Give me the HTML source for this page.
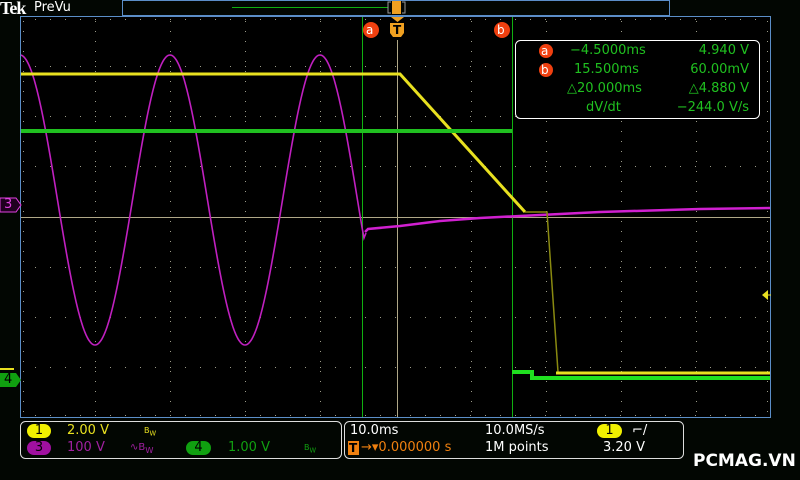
<!DOCTYPE html>
<html><head><meta charset="utf-8"><style>
body{margin:0;width:800px;height:480px;background:#020602;overflow:hidden;font-family:"DejaVu Sans","Liberation Sans",sans-serif;position:relative}
.t{position:absolute;white-space:nowrap;font-size:13px;line-height:14px}
.pill{position:absolute;border-radius:8px;font-size:13px;text-align:center;line-height:14px;color:#000}
</style></head><body>
<svg width="800" height="480" style="position:absolute;left:0;top:0">
<rect x="20" y="16" width="751" height="402" fill="#000"/>
<g id="grid" fill="#9a9a88"></g>
<line x1="20" y1="217.5" x2="771" y2="217.5" stroke="#b0a888" stroke-width="1"/>
<line x1="397.5" y1="40" x2="397.5" y2="418" stroke="#b0a888" stroke-width="1"/>
<line x1="362.5" y1="16" x2="362.5" y2="418" stroke="#10b010"/>
<line x1="512.5" y1="16" x2="512.5" y2="418" stroke="#10b010"/>
<path id="sine" fill="none" stroke="#c020c0" stroke-width="1.6" d=""/>
<path fill="none" stroke="#d020d0" stroke-width="2.5" d="M365,232 L368,229 L400,226 L440,221 L480,218 L520,216 L600,212 L700,209 L771,208"/>
<path fill="none" stroke="#e8e020" stroke-width="3" d="M20,74 L400,74 L525,212"/>
<path fill="none" stroke="#8a8a10" stroke-width="1.5" d="M525,212 L547,212 L558,372"/>
<path fill="none" stroke="#e8e020" stroke-width="3" d="M556,373 L771,373"/>
<path fill="none" stroke="#20c020" stroke-width="4" d="M20,131 L512,131"/>
<path fill="none" stroke="#20e020" stroke-width="4" d="M512,372 L532,372 L532,378 L771,378"/>
<rect x="20.5" y="16.5" width="750" height="401" fill="none" stroke="#5b8ec8"/>
<rect x="122.5" y="0.5" width="547" height="15" fill="none" stroke="#5b8ec8"/>
<line x1="232" y1="7.5" x2="388" y2="7.5" stroke="#10b010"/>
<path d="M391,2 h-3 v11 h3 M402,2 h3 v11 h-3" fill="none" stroke="#999"/>
<rect x="392" y="1" width="9" height="13" fill="#f0a020"/>
<circle cx="371" cy="30" r="8" fill="#f04010"/>
<circle cx="502" cy="30" r="8" fill="#f04010"/>
<path d="M391,17 h13 l-6.5,5z" fill="#f0a020"/>
<path d="M390,23 h14 v10 l-3,4 h-8 l-3,-4z" fill="#f0a020"/>
<path d="M0,198 h16 l5,7 l-5,7 h-16z" fill="#200020" stroke="#e040e0"/>
<path d="M0,373 h16 l5,7 l-5,7 h-16z" fill="#10a010"/>
<line x1="0" y1="369" x2="14" y2="369" stroke="#e8e020" stroke-width="2"/>
<path d="M762,295 l6,-5 v10z" fill="#e8e020"/>
<line x1="766" y1="295" x2="771" y2="295" stroke="#e8e020"/>
<rect x="515.5" y="40.5" width="244" height="78" rx="5" fill="#000" stroke="#fff"/>
<circle cx="546" cy="51" r="7" fill="#f04010"/>
<circle cx="546" cy="70" r="7" fill="#f04010"/>
<rect x="20.5" y="421.5" width="321" height="37" rx="5" fill="none" stroke="#ddd"/>
<rect x="344.5" y="421.5" width="339" height="37" rx="5" fill="none" stroke="#ddd"/>
<rect x="348" y="441" width="11" height="14" fill="#f08010"/>
</svg>
<div class="t" style="left:0;top:-1px;font-family:'Liberation Serif',serif;font-weight:bold;font-size:18px;line-height:18px;color:#fff;letter-spacing:-1px">Tek</div>
<div class="t" style="left:34px;top:1px;color:#fff">PreVu</div>
<div class="t" style="left:366px;top:23px;color:#fff;font-size:12px">a</div>
<div class="t" style="left:497px;top:23px;color:#fff;font-size:12px">b</div>
<div class="t" style="left:393px;top:23px;color:#000;font-size:12px;font-weight:bold">T</div>
<div class="t" style="left:4px;top:198px;color:#e040e0;font-size:13px">3</div>
<div class="t" style="left:4px;top:373px;color:#000;font-size:13px">4</div>
<div class="t" style="left:541px;top:44px;color:#fff;font-size:12px">a</div>
<div class="t" style="left:541px;top:63px;color:#fff;font-size:12px">b</div>
<div class="t" style="left:570px;top:44px;color:#20c020">−4.5000ms</div>
<div class="t" style="left:574px;top:63px;color:#20c020">15.500ms</div>
<div class="t" style="left:567px;top:82px;color:#20c020">△20.000ms</div>
<div class="t" style="left:586px;top:101px;color:#20c020">dV/dt</div>
<div class="t" style="right:51px;top:44px;color:#20c020">4.940 V</div>
<div class="t" style="right:51px;top:63px;color:#20c020">60.00mV</div>
<div class="t" style="right:51px;top:82px;color:#20c020">△4.880 V</div>
<div class="t" style="right:51px;top:101px;color:#20c020">−244.0 V/s</div>
<div class="pill" style="left:27px;top:424px;width:24px;height:14px;background:#f0f000">1</div>
<div class="t" style="left:67px;top:424px;color:#e8e020">2.00 V</div>
<div class="t" style="left:144px;top:424px;color:#e8e020;font-size:8px">B<sub>W</sub></div>
<div class="pill" style="left:27px;top:441px;width:24px;height:14px;background:#a010a0">3</div>
<div class="t" style="left:67px;top:441px;color:#a020a0">100 V</div>
<div class="t" style="left:130px;top:441px;color:#a020a0;font-size:10px">∿B<sub>W</sub></div>
<div class="pill" style="left:186px;top:441px;width:25px;height:14px;background:#10a010">4</div>
<div class="t" style="left:228px;top:441px;color:#10a010">1.00 V</div>
<div class="t" style="left:304px;top:441px;color:#10a010;font-size:8px">B<sub>W</sub></div>
<div class="t" style="left:350px;top:424px;color:#fff">10.0ms</div>
<div class="t" style="left:485px;top:424px;color:#fff">10.0MS/s</div>
<div class="pill" style="left:597px;top:424px;width:25px;height:14px;background:#f0f000">1</div>
<div class="t" style="left:632px;top:424px;color:#fff">⌐/</div>
<div class="t" style="left:349px;top:441px;color:#000;font-size:12px;font-weight:bold">T</div>
<div class="t" style="left:361px;top:441px;color:#f08010">→▾0.000000 s</div>
<div class="t" style="left:485px;top:441px;color:#fff">1M points</div>
<div class="t" style="left:603px;top:441px;color:#fff">3.20 V</div>
<div class="t" style="left:693px;top:452px;color:#fff;font-weight:bold;font-size:17px;line-height:18px">PCMAG.VN</div>
<script>
var d="";for(var x=20;x<=362;x++){var y=200-145*Math.cos(2*Math.PI*(x-170)/150);d+=(x==20?"M":"L")+x+","+y.toFixed(1);}
d+=" L364,238 L366,233";
document.getElementById("sine").setAttribute("d",d);
var g=document.getElementById("grid"),s="",NS="http://www.w3.org/2000/svg";
var xs=[95,170,245,320,471,546,621,696],ys=[66,116,166,267,317,367];
function dot(x,y){var r=document.createElementNS(NS,"rect");r.setAttribute("x",x);r.setAttribute("y",y);r.setAttribute("width",1);r.setAttribute("height",1);g.appendChild(r);}
xs.forEach(function(x){for(var y=21;y<418;y+=10)dot(x,y);});
ys.forEach(function(y){for(var x=20;x<771;x+=15)dot(x,y);});
for(var y=21;y<418;y+=10){dot(23,y);dot(767,y);}
for(var x=20;x<771;x+=15){dot(x,19);dot(x,415);}
</script>
</body></html>
